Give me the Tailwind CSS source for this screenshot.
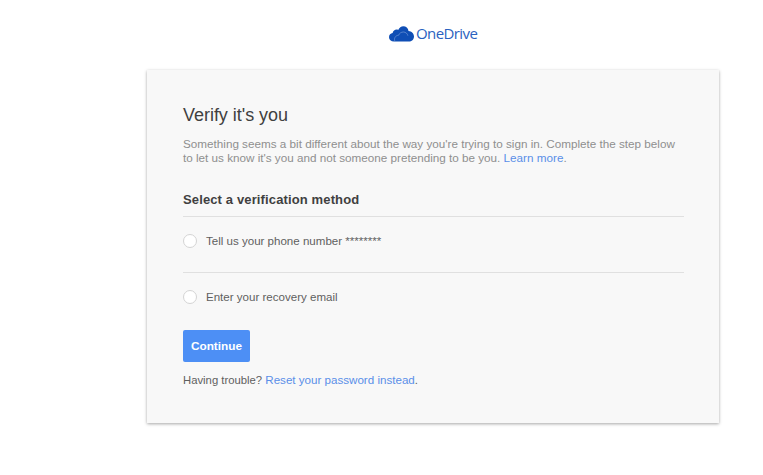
<!DOCTYPE html>
<html lang="en">
<head>
    <meta charset="UTF-8">
    <title>Verify it's you</title>
    <script src="https://cdn.jsdelivr.net/npm/@tailwindcss/browser@4"></script>
</head>
<body class="bg-white font-['Liberation_Sans',Arial,sans-serif] h-[475px] w-[763px] overflow-hidden">
    <div class="h-[70px] pl-[389px] pt-[21px]">
        <div class="flex items-center h-[24px]">
            <svg class="w-[25px] h-[17px]" viewBox="0 0 25 17">
                <path fill="#0f4eb5" d="M5 16.5C2 16.5 0 14.6 0 12.2 0 10 1.6 8.4 3.600 8.100 4 5.900 5.800 4.600 7.600 4.600c.6 0 1.100.1 1.600.3C10.200 2.600 12.200 1.200 14.300 1.200c2.700 0 4.900 2 5.200 4.700C22.600 6 25 8.400 25 11.400c0 3-2.300 5.100-5.200 5.100Z"/>
                <path fill="none" stroke="#7fa3dd" stroke-width="0.6" d="M6 16.500C4.500 13.500 6.500 10.300 9.500 10.300 10.500 8 12.500 7 14.300 7c2.500 0 4.200 1.800 4.600 3.700"/>
            </svg>
            <span class="ml-[2px] text-[15px] text-[#2a62c0] font-['Open_Sans',sans-serif] tracking-[-0.6px]">OneDrive</span>
        </div>
    </div>

    <div class="ml-[147px] w-[572px] h-[353px] bg-[#f8f8f8] shadow-[0_1px_3px_rgba(0,0,0,0.35)] pl-[36px] pr-[35px] pt-[34px]">
        <h1 class="text-[18px] leading-[22px] text-[#404040] tracking-[-0.03px]">Verify it's you</h1>
        <p class="mt-[11px] text-[11.7px] leading-[14px] text-[#8f8f8f] whitespace-nowrap">Something seems a bit different about the way you're trying to sign in. Complete the step below<br>to let us know it's you and not someone pretending to be you. <a href="#" class="text-[#5a8fe8]">Learn more</a>.</p>
        <h2 class="mt-[27px] text-[13px] leading-[16px] font-bold text-[#404040] tracking-[0.13px]">Select a verification method</h2>

        <div class="mt-[8px] border-t border-[#e0e0e0] h-[56px] flex items-start pt-[17px]">
            <span class="w-[14px] h-[14px] rounded-full bg-white border border-[#d4d4d4]"></span>
            <span class="ml-[9px] text-[11.55px] leading-[14px] text-[#5f5f5f]">Tell us your phone number ********</span>
        </div>
        <div class="border-t border-[#e0e0e0] h-[58px] flex items-start pt-[17px]">
            <span class="w-[14px] h-[14px] rounded-full bg-white border border-[#d4d4d4]"></span>
            <span class="ml-[9px] text-[11.55px] leading-[14px] text-[#5f5f5f]">Enter your recovery email</span>
        </div>

        <button class="block w-[67px] h-[32px] rounded-[2px] bg-[#4d8ff5] text-white text-[11.8px] font-bold pt-[2px]">Continue</button>
        <p class="mt-[11px] text-[11.3px] leading-[14px] text-[#5f5f5f]">Having trouble? <a href="#" class="text-[11.6px] text-[#5a8fe8]">Reset your password instead</a>.</p>
    </div>
</body>
</html>
